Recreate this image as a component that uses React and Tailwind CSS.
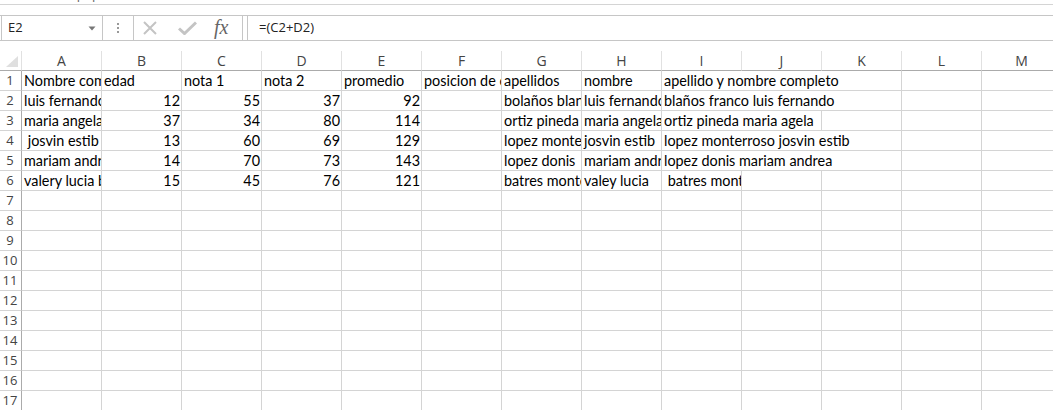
import React from 'react';

const COLS = ['A','B','C','D','E','F','G','H','I','J','K','L','M'];
const SPAN = { 1: '', 2: 'col-span-2', 3: 'col-span-3' };

const DATA = [
  [['Nombre completo'], ['edad'], ['nota 1'], ['nota 2'], ['promedio'], ['posicion de caracter'], ['apellidos'], ['nombre'], ['apellido y nombre completo', 3]],
  [['luis fernando bolaños'], [12], [55], [37], [92], [''], ['bolaños blanco'], ['luis fernando'], ['blaños franco luis fernando', 3]],
  [['maria angela ortiz'], [37], [34], [80], [114], [''], ['ortiz pineda'], ['maria angela'], ['ortiz pineda maria agela', 2]],
  [[' josvin estib'], [13], [60], [69], [129], [''], ['lopez monterroso'], ['josvin estib'], ['lopez monterroso josvin estib', 3]],
  [['mariam andrea lopez'], [14], [70], [73], [143], [''], ['lopez donis'], ['mariam andrea'], ['lopez donis mariam andrea', 3]],
  [['valery lucia batres'], [15], [45], [76], [121], [''], ['batres monterroso'], ['valey lucia'], [' batres monterroso', 1], [' ']],
];

function buildRow(r) {
  const cells = [];
  let used = 0;
  for (const [v, s = 1] of r) {
    cells.push({ v, s });
    used += s;
  }
  while (used < 13) {
    cells.push({ v: '', s: 1 });
    used += 1;
  }
  return cells;
}

function Cell({ v, s }) {
  const num = typeof v === 'number';
  return (
    <div
      className={`${SPAN[s]} h-[20px] border-r border-b border-[#d4d4d4] overflow-hidden whitespace-pre flex items-end px-[2px] text-[14.4px] leading-[18px] text-black ${num ? 'justify-end pr-[1px]' : ''}`}
      style={{ fontFamily: 'Lato, "Noto Sans", sans-serif' }}
    >
      {String(v)}
    </div>
  );
}

function RowHead({ n }) {
  return (
    <div className="h-[20px] border-r border-b border-r-[#ababab] border-b-[#d4d4d4] flex items-center justify-center pr-[1px] text-[13px] text-[#444]">
      {n}
    </div>
  );
}

export default function App() {
  const rows = [];
  for (let i = 0; i < 17; i++) rows.push(DATA[i] ? buildRow(DATA[i]) : buildRow([]));

  return (
    <div className="w-[1053px] h-[410px] overflow-hidden bg-white" style={{ fontFamily: '"Open Sans", "Noto Sans", sans-serif' }}>
      {/* ribbon remnant */}
      <div className="h-[5px] border-b border-[#d4d4d4] overflow-hidden">
        <div className="-mt-[15px] pl-[44px] text-[13px] text-[#666]">Portapapeles</div>
      </div>
      <div className="h-[10px]" />
      {/* formula bar */}
      <div className="flex h-[26px] items-stretch border-y border-[#c6c6c6]">
        <div className="ml-[1px] w-[102px] border-x border-[#c6c6c6] -my-px border-y flex items-center justify-between pl-[6px] pr-[6px]">
          <span className="text-[13px] text-[#222]">E2</span>
          <svg width="8" height="5" viewBox="0 0 8 5"><path d="M0.5 0.5 L7.5 0.5 L4 4.5 Z" fill="#777" /></svg>
        </div>
        <div className="w-[30px] flex flex-col items-center justify-center gap-[2px]">
          <span className="block w-[2px] h-[2px] bg-[#999]" />
          <span className="block w-[2px] h-[2px] bg-[#999]" />
          <span className="block w-[2px] h-[2px] bg-[#999]" />
        </div>
        <div className="w-[110px] border-x border-[#c6c6c6] flex items-center pl-[9px]">
          <svg width="14" height="14" viewBox="0 0 14 14" className="mr-[21px]">
            <path d="M1 1 L13 13 M13 1 L1 13" stroke="#c4c4c4" strokeWidth="2" />
          </svg>
          <svg width="19" height="14" viewBox="0 0 19 14" className="mr-[17px]">
            <path d="M1 7.5 L6.5 12.5 L18 1.5" stroke="#c4c4c4" strokeWidth="3" fill="none" />
          </svg>
          <span className="text-[20px] italic text-[#666] leading-none -mt-[3px]" style={{ fontFamily: '"Liberation Serif", serif' }}>fx</span>
        </div>
        <div className="w-[4px]" />
        <div className="flex-1 border-l border-[#c6c6c6] flex items-center pl-[11px] text-[13px] text-[#222]">=(C2+D2)</div>
      </div>
      <div className="h-[10px]" />
      {/* sheet */}
      <div className="grid grid-cols-[22px_repeat(13,80px)] auto-rows-[20px]">
        <div className="h-[20px] border-r border-b border-r-[#e1e1e1] border-b-[#ababab] flex items-end justify-end pr-[3px] pb-[3px]">
          <svg width="12" height="11" viewBox="0 0 12 11"><path d="M12 0 L12 11 L0 11 Z" fill="#dfdfdf" /></svg>
        </div>
        {COLS.map((c) => (
          <div key={c} className="h-[20px] border-r border-b border-r-[#e1e1e1] border-b-[#ababab] flex items-center justify-center text-[14px] text-[#444]">
            {c}
          </div>
        ))}
        {rows.map((cells, i) => (
          <React.Fragment key={i}>
            <RowHead n={i + 1} />
            {cells.map((c, j) => (
              <Cell key={j} v={c.v} s={c.s} />
            ))}
          </React.Fragment>
        ))}
      </div>
    </div>
  );
}
